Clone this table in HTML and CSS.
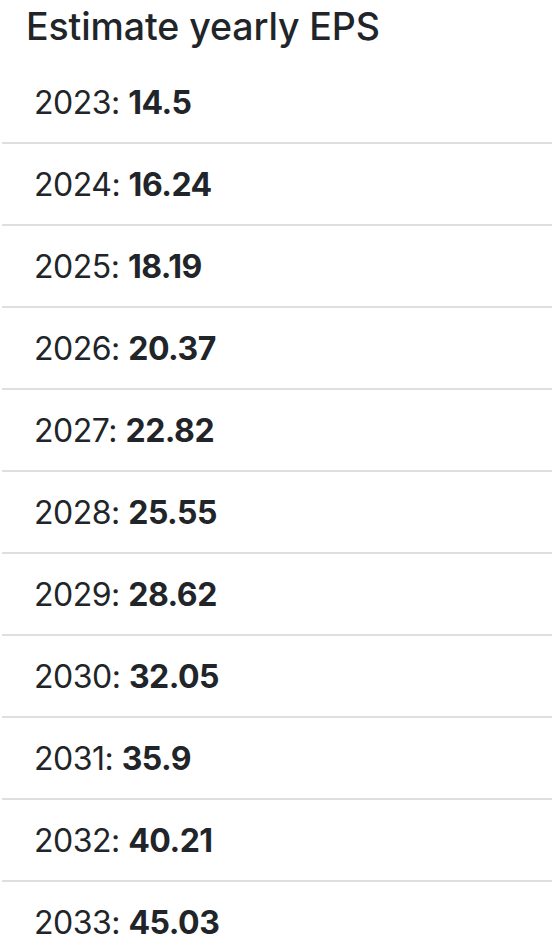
FILE: index.html
```html
<!DOCTYPE html>
<html lang="en">
<head>
<meta charset="utf-8">
<title>Estimate yearly EPS</title>
<link rel="stylesheet" href="styles.css">
</head>
<body>
<div class="panel">
  <h5 class="title">Estimate yearly EPS</h5>
  <ul class="list">
    <li class="item">2023: <b>14.5</b></li>
    <li class="item">2024: <b>16.24</b></li>
    <li class="item">2025: <b>18.19</b></li>
    <li class="item">2026: <b>20.37</b></li>
    <li class="item">2027: <b>22.82</b></li>
    <li class="item">2028: <b>25.55</b></li>
    <li class="item">2029: <b>28.62</b></li>
    <li class="item">2030: <b>32.05</b></li>
    <li class="item">2031: <b>35.9</b></li>
    <li class="item">2032: <b>40.21</b></li>
    <li class="item">2033: <b>45.03</b></li>
  </ul>
</div>
</body>
</html>
```
FILE: styles.css
```css
html, body {
  margin: 0;
  padding: 0;
  background: #fff;
  overflow: hidden;
}
body {
  font-family: Inter, "Liberation Sans", sans-serif;
  color: #212529;
}
.panel {
  padding-left: 2px;
}
.title {
  margin: 0;
  padding: 3px 0 0 24px;
  font-size: 37.5px;
  font-weight: 500;
  line-height: 48px;
  height: 59px;
  letter-spacing: -0.1px;
}
.list {
  list-style: none;
  margin: 0;
  padding: 0;
}
.item {
  padding: 17px 32px 15px;
  font-size: 32px;
  line-height: 48px;
  letter-spacing: -0.5px;
  border-bottom: 2px solid #dfdfdf;
}
.item:last-child {
  border-bottom: 0;
}
.item b {
  font-weight: 700;
}
```
